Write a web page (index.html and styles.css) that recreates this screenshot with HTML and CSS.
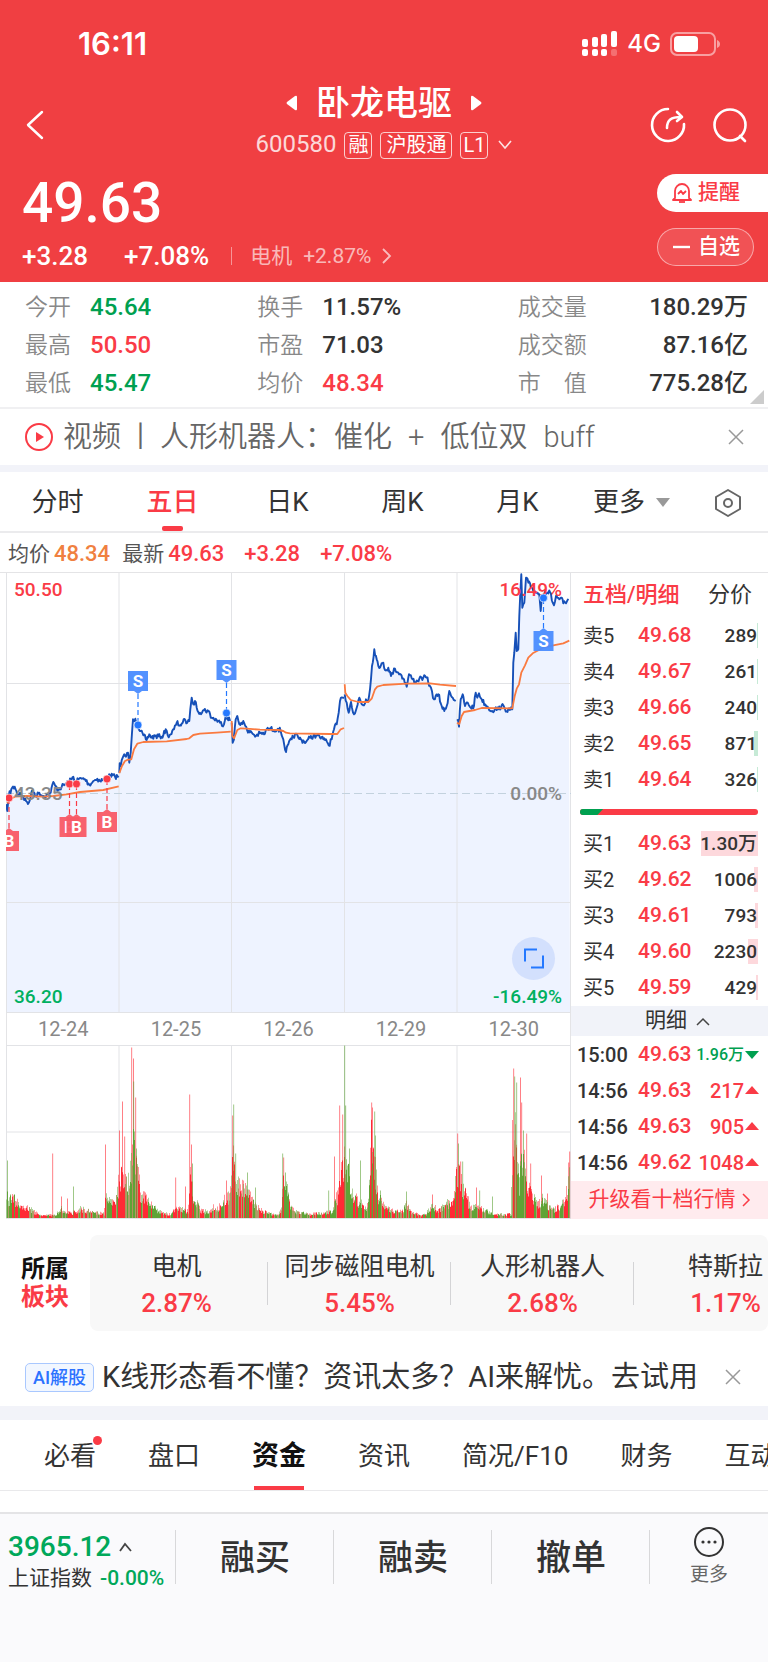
FILE: index.html
```
<!DOCTYPE html>
<html lang="zh-CN">
<head>
<meta charset="utf-8">
<meta name="viewport" content="width=device-width, initial-scale=1">
<title>卧龙电驱 600580</title>
<link rel="stylesheet" href="styles.css">
</head>
<body>
<header class="hero">
  <div class="status">
    <span class="clock">16:11</span>
    <div class="status-right">
      <svg class="signal" width="36" height="26" viewBox="0 0 36 26" fill="#fff" aria-hidden="true">
        <rect x="0" y="8" width="6" height="8" rx="2"/><rect x="10" y="6" width="6" height="10" rx="2"/><rect x="19" y="3" width="6" height="13" rx="2"/><rect x="29" y="0" width="6" height="16" rx="2"/>
        <rect x="0" y="18" width="6" height="7" rx="2"/><rect x="10" y="18" width="6" height="7" rx="2"/><rect x="19" y="18" width="6" height="7" rx="2"/><rect x="29" y="18" width="6" height="7" rx="2" opacity=".25"/>
      </svg>
      <span class="network">4G</span>
      <svg width="50" height="24" viewBox="0 0 50 24" aria-hidden="true">
        <rect x="1" y="1" width="44" height="22" rx="6" fill="none" stroke="#fff" stroke-opacity=".5" stroke-width="2"/>
        <rect x="4" y="4" width="24" height="16" rx="4" fill="#fff"/>
        <path d="M47 8c2 1 3 2 3 4s-1 3-3 4z" fill="#fff" opacity=".5"/>
      </svg>
    </div>
  </div>
  <nav class="nav">
    <button class="icon-btn back" aria-label="返回">
      <svg width="18" height="30" viewBox="0 0 18 30" fill="none" stroke="#fff" stroke-width="2.4" stroke-linecap="round" stroke-linejoin="round"><path d="M16 2 2 15l14 13"/></svg>
    </button>
    <div class="nav-center">
      <div class="title-row">
        <button aria-label="上一只"><svg width="12" height="16" viewBox="0 0 12 16" fill="#fff"><path d="M11 2v12q0 2-2 1L1 9Q0 8 1 7l8-6q2-1 2 1z"/></svg></button>
        <h1>卧龙电驱</h1>
        <button aria-label="下一只"><svg width="12" height="16" viewBox="0 0 12 16" fill="#fff"><path d="M1 2v12q0 2 2 1l8-6q1-1 0-2L3 1Q1 0 1 2z"/></svg></button>
      </div>
      <div class="code-row">
        <span class="code">600580</span>
        <span class="tag tag-narrow">融</span>
        <span class="tag">沪股通</span>
        <span class="tag tag-level">L1</span>
        <svg class="more-caret" width="14" height="10" viewBox="0 0 14 10" fill="none" stroke="#fff" stroke-opacity=".85" stroke-width="1.6"><path d="m1 1 6 7 6-7"/></svg>
      </div>
    </div>
    <div class="nav-actions">
      <button class="icon-btn" aria-label="分享">
        <svg width="36" height="36" viewBox="0 0 36 36" fill="none" stroke="#fff" stroke-width="2.6" stroke-linecap="round" stroke-linejoin="round"><path d="M18 2A16 16 0 1 0 34 17"/><path d="M17 21c0-8 4-11 14-11M27 5l5 5-5 4"/></svg>
      </button>
      <button class="icon-btn" aria-label="搜索">
        <svg width="36" height="36" viewBox="0 0 36 36" fill="none" stroke="#fff" stroke-width="2.6" stroke-linecap="round"><circle cx="18" cy="18" r="15.5"/><path d="m28 29 5 5"/></svg>
      </button>
    </div>
  </nav>
  <section class="quote">
    <div>
      <div class="price">49.63</div>
      <div class="change">
        <span>+3.28</span><span>+7.08%</span><i class="change-rule"></i>
        <a class="sector-link" href="#sectors">电机<span>+2.87%</span>
          <svg width="10" height="16" viewBox="0 0 10 16" fill="none" stroke="currentColor" stroke-width="1.8"><path d="m1 1 7 7-7 7"/></svg></a>
      </div>
    </div>
    <div class="pills">
      <button class="pill pill-alert">
        <svg width="20" height="22" viewBox="0 0 20 22" fill="none" stroke="currentColor" stroke-width="1.8" stroke-linejoin="round"><path d="M3 16V9a7 7 0 0 1 14 0v7l2 2H1z"/><path d="M7 20h6"/><path d="m6 12 3-3 2 3 3-3"/></svg>提醒</button>
      <button class="pill pill-watch"><svg width="17" height="4" viewBox="0 0 17 4"><path d="M0 2h17" stroke="#fff" stroke-width="2.4"/></svg>自选</button>
    </div>
  </section>
</header>

<main>
  <section class="stats">
    <dl><dt>今开</dt><dd class="down">45.64</dd></dl>
    <dl><dt>换手</dt><dd>11.57%</dd></dl>
    <dl class="wide"><dt>成交量</dt><dd>180.29万</dd></dl>
    <dl><dt>最高</dt><dd class="up">50.50</dd></dl>
    <dl><dt>市盈</dt><dd>71.03</dd></dl>
    <dl class="wide"><dt>成交额</dt><dd>87.16亿</dd></dl>
    <dl><dt>最低</dt><dd class="down">45.47</dd></dl>
    <dl><dt>均价</dt><dd class="up">48.34</dd></dl>
    <dl class="wide"><dt>市　值</dt><dd>775.28亿</dd></dl>
    <i class="corner"></i>
  </section>

  <section class="notice">
    <svg width="28" height="28" viewBox="0 0 28 28" fill="none" stroke="#fa3b46" stroke-width="2"><circle cx="14" cy="14" r="13"/><path d="M11 9v10l8-5z" fill="#fa3b46" stroke="none"/></svg>
    <p class="notice-text"><span>视频</span><span>丨</span><span>人形机器人：催化</span><span>+</span><span>低位双</span><span>buff</span></p>
    <button class="close" aria-label="关闭"><svg width="16" height="16" viewBox="0 0 16 16" stroke="#999" stroke-width="1.5"><path d="m1 1 14 14M15 1 1 15"/></svg></button>
  </section>

  <nav class="periods">
    <button>分时</button>
    <button class="active">五日</button>
    <button>日K</button>
    <button>周K</button>
    <button>月K</button>
    <button class="period-more">更多<i class="tri-down"></i></button>
    <button aria-label="图表设置"><svg width="28" height="28" viewBox="0 0 28 28" fill="none" stroke="#666" stroke-width="2" stroke-linejoin="round"><path d="M14 1 26 8v12l-12 7L2 20V8z"/><circle cx="14" cy="14" r="4"/></svg></button>
  </nav>

  <div class="legend">
    <span>均价<b class="avg">48.34</b></span>
    <span>最新<b class="up">49.63</b></span>
    <b class="up">+3.28</b>
    <b class="up">+7.08%</b>
  </div>

  <section class="board">
    <div class="charts">
      <svg id="price-chart" class="chart" viewBox="0 0 565 440" role="img" aria-label="五日分时走势"></svg>
      <div class="dates"><span>12-24</span><span>12-25</span><span>12-26</span><span>12-29</span><span>12-30</span></div>
      <svg id="volume-chart" class="chart" viewBox="0 0 565 174" role="img" aria-label="成交量"></svg>
    </div>

    <aside class="book">
      <div class="book-tabs"><button class="active">五档/明细</button><button>分价</button></div>
      <table class="levels sell">
        <tr><th>卖5</th><td>49.68</td><td><i style="width:1px"></i><span>289</span></td></tr>
        <tr><th>卖4</th><td>49.67</td><td><i style="width:1px"></i><span>261</span></td></tr>
        <tr><th>卖3</th><td>49.66</td><td><i style="width:1px"></i><span>240</span></td></tr>
        <tr><th>卖2</th><td>49.65</td><td><i style="width:4px"></i><span>871</span></td></tr>
        <tr><th>卖1</th><td>49.64</td><td><i style="width:1px"></i><span>326</span></td></tr>
      </table>
      <div class="ratio"><i style="width:13%"></i></div>
      <table class="levels buy">
        <tr><th>买1</th><td>49.63</td><td><i style="width:57px"></i><span>1.30万</span></td></tr>
        <tr><th>买2</th><td>49.62</td><td><i style="width:4px"></i><span>1006</span></td></tr>
        <tr><th>买3</th><td>49.61</td><td><i style="width:3px"></i><span>793</span></td></tr>
        <tr><th>买4</th><td>49.60</td><td><i style="width:10px"></i><span>2230</span></td></tr>
        <tr><th>买5</th><td>49.59</td><td><i style="width:2px"></i><span>429</span></td></tr>
      </table>
      <button class="detail-toggle">明细<svg width="14" height="9" viewBox="0 0 14 9" fill="none" stroke="#444" stroke-width="1.5"><path d="m1 8 6-6 6 6"/></svg></button>
      <table class="ticks">
        <tr><td>15:00</td><td>49.63</td><td class="small">1.96万<i class="arrow-down"></i></td></tr>
        <tr><td>14:56</td><td>49.63</td><td>217<i class="arrow-up"></i></td></tr>
        <tr><td>14:56</td><td>49.63</td><td>905<i class="arrow-up"></i></td></tr>
        <tr><td>14:56</td><td>49.62</td><td>1048<i class="arrow-up"></i></td></tr>
      </table>
      <a class="upgrade" href="#upgrade">升级看十档行情<svg width="9" height="14" viewBox="0 0 9 14" fill="none" stroke="currentColor" stroke-width="1.5"><path d="m1 1 6 6-6 6"/></svg></a>
    </aside>
  </section>

  <section class="sectors" id="sectors">
    <h2>所属<em>板块</em></h2>
    <ul>
      <li>电机<b>2.87%</b></li>
      <li>同步磁阻电机<b>5.45%</b></li>
      <li>人形机器人<b>2.68%</b></li>
      <li>特斯拉<b>1.17%</b></li>
    </ul>
  </section>

  <section class="ai">
    <span class="ai-badge">AI解股</span>
    <a class="ai-text" href="#ai">K线形态看不懂？资讯太多？AI来解忧。去试用</a>
    <button class="close" aria-label="关闭"><svg width="16" height="16" viewBox="0 0 16 16" stroke="#999" stroke-width="1.5"><path d="m1 1 14 14M15 1 1 15"/></svg></button>
  </section>

  <nav class="sections">
    <a href="#a">必看<i class="dot"></i></a>
    <a href="#b">盘口</a>
    <a href="#c" class="active">资金</a>
    <a href="#d">资讯</a>
    <a href="#e">简况/F10</a>
    <a href="#f">财务</a>
    <a href="#g">互动</a>
  </nav>
</main>

<footer class="dock">
  <button class="index">
    <span class="index-value">3965.12<svg width="13" height="10" viewBox="0 0 13 10" fill="none" stroke="#444" stroke-width="1.8"><path d="m1 9 5-7 6 7"/></svg></span>
    <span class="index-name">上证指数<b>-0.00%</b></span>
  </button>
  <button class="trade">融买</button>
  <button class="trade">融卖</button>
  <button class="trade">撤单</button>
  <button class="dock-more">
    <svg width="30" height="30" viewBox="0 0 30 30" fill="#333"><circle cx="15" cy="15" r="14" fill="none" stroke="#333" stroke-width="2"/><circle cx="9" cy="15" r="1.6"/><circle cx="15" cy="15" r="1.6"/><circle cx="21" cy="15" r="1.6"/></svg>
    更多
  </button>
</footer>
<script src="chart.js"></script>
</body>
</html>
```
FILE: styles.css
```
* { box-sizing: border-box; }
body {
  margin: 0;
  min-height: 100vh;
  display: flex;
  flex-direction: column;
  background: #fff;
  color: #333;
  font-family: Roboto, "Noto Sans CJK SC", sans-serif;
  font-size: 21px;
  line-height: 1.3;
  overflow-x: hidden;
}
button {
  margin: 0;
  padding: 0;
  border: 0;
  background: none;
  color: inherit;
  font: inherit;
}
a { color: inherit; text-decoration: none; }
svg { display: block; flex: none; }
p, h1, h2, ul, dl, dd { margin: 0; padding: 0; }
b { font-weight: 500; }
.up { color: #fa3b46; }
.down { color: #00a050; }

/* Header */
.hero { background: #f03f42; color: #fff; }
.status {
  height: 80px;
  padding: 8px 48px 0 78px;
  display: flex;
  align-items: center;
  justify-content: space-between;
  font-family: Inter, sans-serif;
}
.clock { font-size: 31px; font-weight: 600; }
.status-right { display: flex; align-items: center; gap: 9px; }
.network { font-size: 24px; font-weight: 500; }
.nav {
  display: grid;
  grid-template-columns: 1fr auto 1fr;
  height: 84px;
  padding: 0 20px;
}
.icon-btn { padding-top: 6px; display: flex; align-items: center; }
.back { padding-left: 6px; }
.title-row { display: flex; align-items: center; justify-content: center; gap: 18px; height: 46px; }
h1 { font-size: 34px; font-weight: 500; line-height: 46px; }
.code-row { display: flex; align-items: center; justify-content: center; gap: 8px; height: 38px; }
.code { font-size: 24px; opacity: .8; }
.tag {
  height: 27px;
  padding: 0 5px;
  border: 1px solid rgba(255, 255, 255, .75);
  border-radius: 4px;
  font-size: 20px;
  line-height: 25px;
}
.tag-narrow { padding: 0 3px; }
.tag-level { padding: 0 2px; }
.more-caret { margin-left: 2px; }
.nav-actions { display: flex; justify-content: flex-end; gap: 26px; }
.quote { display: flex; justify-content: space-between; height: 118px; }
.quote > div:first-child { padding-left: 22px; }
.price { font-size: 55px; font-weight: 500; line-height: 78px; }
.change { display: flex; align-items: center; font-size: 26px; font-weight: 500; line-height: 28px; gap: 36px; }
.change-rule { width: 1px; height: 18px; margin: 0 -18px 0 -14px; background: rgba(255, 255, 255, .45); }
.sector-link { display: flex; align-items: center; font-size: 21px; font-weight: 400; gap: 11px; color: rgba(255, 255, 255, .65); }
.pills { display: flex; flex-direction: column; align-items: stretch; width: 111px; padding-top: 10px; gap: 16px; }
.pill { display: flex; align-items: center; gap: 6px; height: 38px; padding-left: 15px; font-size: 21px; font-weight: 500; }
.pill-alert { border-radius: 19px 0 0 19px; background: #fff; color: #fa3b46; }
.pill-watch { margin-right: 14px; gap: 8px; border: 1px solid rgba(255, 255, 255, .5); border-radius: 19px; background: rgba(255, 255, 255, .1); }

/* Key figures */
.stats {
  position: relative;
  display: grid;
  grid-template-columns: 232fr 260fr 230fr;
  padding: 7px 20px 4px 25px;
  border-bottom: 2px solid #f0f0f2;
}
.stats dl { display: flex; align-items: center; gap: 19px; height: 38px; }
.stats .wide { justify-content: space-between; }
.stats dt { font-size: 23px; font-weight: 350; color: #888; white-space: nowrap; }
.stats dd { font-size: 24px; font-weight: 500; white-space: nowrap; }
.corner { position: absolute; right: 4px; bottom: 3px; border-left: 14px solid transparent; border-bottom: 14px solid #ccc; }

/* Promo rows */
.notice, .ai { display: flex; align-items: center; padding: 0 24px 0 25px; }
.notice { height: 56px; color: #666; }
.notice-text { display: flex; flex: 1; gap: 16px; padding: 2px 0 0 10px; font-size: 29px; font-weight: 350; white-space: nowrap; }
.notice-text span:nth-child(2) { margin: 0 -11px; }
.close { display: flex; }

/* Period tabs */
.periods {
  display: grid;
  grid-template-columns: 115fr 115fr 115fr 115fr 115fr 113fr 80fr;
  height: 68px;
  border-top: 7px solid #f2f3f9;
  border-bottom: 2px solid #ebebed;
  font-size: 26px;
}
.periods button { position: relative; display: flex; align-items: center; justify-content: center; padding-top: 2px; }
.periods .active { color: #fa3b46; font-weight: 500; }
.periods .active::after { content: ""; position: absolute; bottom: 0; width: 21px; height: 5px; border-radius: 2px; background: #fa3b46; }
.period-more { gap: 11px; }
.tri-down { border: solid transparent; border-width: 9px 7px 0; border-top-color: #999; }

.legend { display: flex; align-items: center; gap: 20px; height: 39px; padding: 3px 0 0 8px; color: #555; font-size: 21px; }
.legend span:first-child { margin-right: -8px; }
.legend b { font-size: 22px; }
.legend span b { padding-left: 4px; }
.avg { color: #f08040; }

/* Charts and order book */
.board { display: grid; grid-template-columns: minmax(0, 571fr) minmax(0, 197fr); border-top: 1px solid #e4e4e6; }
.charts { padding-left: 6px; }
.chart { display: block; width: 100%; height: auto; }
.chart text { font: 500 19px Roboto, sans-serif; }
.dates {
  display: grid;
  grid-template-columns: repeat(5, 1fr);
  height: 32px;
  border-left: 1px solid #e4e4e6;
  border-right: 1px solid #e4e4e6;
  text-align: center;
  font-size: 20px;
  line-height: 32px;
  color: #888;
}
.book { display: flex; flex-direction: column; }
.book-tabs { display: flex; justify-content: space-between; align-items: center; height: 45px; padding: 0 16px 0 12px; font-size: 22px; }
.book-tabs .active { color: #fa3b46; font-weight: 500; }
.book table { width: 100%; border-collapse: collapse; table-layout: fixed; }
.book td, .book th { height: 36px; padding: 0; white-space: nowrap; }
.levels th { width: 34%; padding-left: 12px; text-align: left; font-size: 20px; font-weight: 400; }
.levels td:nth-child(2), .ticks td:nth-child(2) { width: 28%; color: #fa3b46; font-size: 21px; font-weight: 500; }
.levels td:nth-child(3) { position: relative; padding-right: 11px; text-align: right; font-size: 19px; font-weight: 500; }
.levels td span { position: relative; }
.levels td i { position: absolute; right: 10px; top: 5px; height: 25px; background: #fdd8dc; }
.sell td i { background: #c6ead6; }
.ratio { height: 6px; margin: 11px 10px 11px 9px; border-radius: 3px; background: #fa3b46; overflow: hidden; }
.ratio i { display: block; height: 6px; background: #00a050; clip-path: polygon(0 0, 100% 0, 75% 100%, 0 100%); }
.detail-toggle { display: flex; align-items: center; justify-content: center; gap: 9px; width: 100%; height: 30px; padding-left: 16px; background: #f1f3f9; font-size: 21px; }
.ticks { margin-top: 1px; }
.ticks td { font-size: 20px; font-weight: 500; }
.ticks td:first-child { width: 34%; padding-left: 6px; }
.ticks td:last-child { padding-right: 9px; text-align: right; color: #fa3b46; }
.ticks td.small:last-child { color: #00a050; font-size: 16px; }
.arrow-up, .arrow-down { display: inline-block; margin-left: 1px; border: solid transparent; vertical-align: middle; }
.arrow-up { margin-bottom: 6px; border-width: 0 7px 8px; border-bottom-color: #fa3b46; }
.arrow-down { border-width: 8px 7px 0; border-top-color: #00a050; }
.upgrade { display: flex; flex: 1; align-items: center; justify-content: center; gap: 6px; min-height: 36px; background: #ffebee; color: #fa3b46; font-size: 21px; }

/* Sectors */
.sectors { display: flex; align-items: center; padding-top: 16px; }
.sectors h2 { width: 90px; padding-left: 21px; flex: none; font-size: 24px; line-height: 28px; color: #111; }
.sectors em { display: block; color: #fa3b46; font-style: normal; }
.sectors ul { display: flex; flex: 1; min-width: 0; height: 96px; overflow: hidden; border-radius: 8px; background: #f8f8f8; list-style: none; }
.sectors li { position: relative; flex: none; width: 183px; padding-top: 14px; text-align: center; font-size: 25px; line-height: 36px; }
.sectors li:first-child { width: 178px; padding-right: 5px; }
.sectors li:not(:last-child)::after { content: ""; position: absolute; right: 0; top: 27px; width: 1px; height: 43px; background: #d4d4d6; }
.sectors b { display: block; color: #fa3b46; font-size: 26px; }

.ai { height: 89px; padding: 17px 27px 0 25px; border-bottom: 14px solid #f2f3f9; }
.ai-badge { flex: none; padding: 0 7px; border: 1px solid #a9c8ff; border-radius: 5px; background: #f2f7ff; color: #2c72ff; font-size: 18px; line-height: 27px; font-weight: 500; }
.ai-text { flex: 1; padding: 2px 0 0 8px; font-size: 29px; white-space: nowrap; }

/* Section tabs */
.sections { display: flex; gap: 52px; height: 71px; padding-left: 44px; border-bottom: 1px solid #e9e9eb; font-size: 26px; line-height: 72px; white-space: nowrap; overflow: hidden; }
.sections a { position: relative; flex: none; height: 70px; }
.sections .active { color: #111; font-size: 27px; font-weight: 700; }
.sections .active::after { content: ""; position: absolute; left: 2px; right: 2px; bottom: 0; height: 4px; background: #fa3b46; }
.dot { position: absolute; right: -6px; top: 16px; width: 9px; height: 9px; border-radius: 50%; background: #fa3b46; }

/* Bottom dock */
.dock { display: grid; grid-template-columns: 176fr 158fr 158fr 158fr 118fr; align-items: start; flex: 1; margin-top: 21px; padding-top: 16px; border-top: 2px solid #e4e4e6; background: #fafafc; }
.dock > button { position: relative; height: 54px; }
.dock > button:not(:last-child)::after { content: ""; position: absolute; right: 0; top: 0; width: 1px; height: 54px; background: #d8d8da; }
.index { display: flex; flex-direction: column; padding: 1px 0 0 8px; white-space: nowrap; }
.index span { display: flex; flex: none; align-items: center; gap: 8px; height: 32px; }
.index-value { color: #00a85a; font-size: 28px; font-weight: 500; }
.index-name { font-size: 21px; }
.index b { color: #00a85a; }
.trade { padding-top: 3px; font-size: 35px; font-weight: 500; }
.dock-more { display: flex; flex-direction: column; align-items: center; justify-content: center; gap: 6px; color: #666; font-size: 19px; }
```
FILE: chart.js
```
const NS = "http://www.w3.org/2000/svg";
const GRID = "#e2e3e6";

function add(parent, tag, attrs, text) {
  const node = document.createElementNS(NS, tag);
  for (const key in attrs) node.setAttribute(key, attrs[key]);
  if (text) node.textContent = text;
  parent.appendChild(node);
  return node;
}

let seed = 7;
function random() {
  seed = (seed * 16807) % 2147483647;
  return seed / 2147483647;
}

// Points are flat x, y lists in thirds of a chart unit.
function pairs(list, dx) {
  const out = [];
  for (let i = 0; i < list.length; i += 2) out.push([list[i] / 3 + dx, list[i + 1] / 3 - 7]);
  return out;
}
const L = -6, R = 274;

const price = [
  pairs([18,715,22,735,26,690,34,670,44,662,52,685,60,680,68,690,78,705,84,714,92,692,98,672,108,690,118,680,130,690,145,685,152,680,160,648,166,660,175,672,185,662,195,655,205,648,215,640,220,632,225,648,235,640,245,638,255,640,268,656,280,645,292,638,300,645,310,640,320,638,330,628,345,632,356,630], L),
  pairs([358,620,359,592,362,600,368,575,373,565,378,572,384,560,388,590,392,560,396,500,399,460,406,458,413,475,420,495,430,508,440,522,448,505,455,515,465,510,480,512,490,508,497,490,503,508,512,505,522,490,530,470,540,478,548,470,556,462,562,470,568,465,571,430,575,395,580,415,585,405,590,425,600,440,612,432,625,435,635,455,650,462,660,470,672,475,677,450,682,455,692,462], L),
  pairs([695,470,698,530,702,520,707,460,712,450,718,475,724,470,730,465,736,480,744,500,752,495,760,505,768,510,780,502,792,505,800,490,812,488,822,492,834,488,842,495,850,520,858,558,865,535,875,520,885,505,895,515,905,522,918,528,930,515,940,510,952,508,960,515,970,520,978,520,986,538,995,520,1002,490,1010,475,1016,440,1020,405,1028,395,1032,395], L),
  pairs([194,385,200,410,206,440,213,408,222,445,230,425,238,395,245,415,252,418,258,400,264,408,270,370,276,300,283,250,290,280,300,305,310,290,315,312,325,305,333,330,345,308,355,320,362,325,372,340,380,362,387,325,398,340,408,348,418,338,430,335,440,335,450,360,462,400,475,385,485,420,493,435,500,420,508,375,518,395,527,405], R),
  pairs([532,460,537,482,542,400,548,385,555,420,563,410,572,425,582,420,587,380,592,395,597,382,605,400,615,415,625,425,637,435,645,428,655,430,665,418,675,430,690,432,697,430,700,290,703,260,707,200,710,255,715,250,718,150,724,25,727,125,733,110,738,35,745,50,755,65,770,80,778,85,782,135,786,90,795,78,810,78,818,110,822,118,828,90,838,100,843,95,850,112,858,112,866,102], R)
];
const average = [
  pairs([22,712,30,700,45,692,80,690,130,692,160,690,200,685,240,678,310,672,356,661], L),
  pairs([358,622,366,600,375,585,384,581,394,580,402,550,412,533,430,528,500,526,560,519,568,517,580,507,600,503,650,500,692,497], L),
  pairs([695,465,697,510,702,517,712,492,722,487,740,488,780,491,835,492,850,495,858,500,870,502,990,504,1012,504,1022,490,1032,486], L),
  pairs([194,355,196,380,202,390,212,402,235,408,265,408,275,398,285,370,292,362,310,357,380,353,450,352,480,356,528,360], R),
  pairs([531,470,538,474,545,450,552,438,585,432,605,426,697,427,704,390,710,368,717,355,724,320,735,298,745,275,758,262,790,245,820,238,850,232,868,224], R)
];

// Adds the minute-to-minute jitter between the main turning points.
function jitter(points) {
  const out = [points[0]];
  for (let i = 1; i < points.length; i++) {
    const [x0, y0] = points[i - 1], [x1, y1] = points[i];
    const steps = Math.max(1, Math.round((x1 - x0) / 0.9));
    for (let s = 1; s <= steps; s++) {
      const t = s / steps;
      const wobble = s === steps ? 0 : (random() - 0.5) * 5;
      out.push([x0 + (x1 - x0) * t, Math.max(1, y0 + (y1 - y0) * t + wobble)]);
    }
  }
  return out;
}
const toPath = pts => "M" + pts.map(p => p[0].toFixed(1) + " " + p[1].toFixed(1)).join("L");

const dayLines = [113, 225.5, 338.5, 451];
const chart = document.getElementById("price-chart");
const detailed = price.map(jitter);
const all = detailed.flat();
add(chart, "path", { d: toPath(all) + "L564 440L0 440Z", fill: "#eef3ff" });
add(chart, "path", { d: "M.5 0V440M564.5 0V440M0 110.5H565M0 329.5H565M0 439.5H565" + dayLines.map(x => "M" + x + " 0V440").join(""), stroke: GRID, fill: "none" });
add(chart, "path", { d: "M0 220.5H565", stroke: "#c3d2de", "stroke-dasharray": "8 4" });
detailed.forEach(p => add(chart, "path", { d: toPath(p), fill: "none", stroke: "#1650b8", "stroke-width": 1.9, "stroke-linejoin": "round" }));
average.forEach(p => add(chart, "path", { d: toPath(p), fill: "none", stroke: "#fa7a40", "stroke-width": 1.8, "stroke-linejoin": "round" }));

add(chart, "text", { x: 8, y: 23, fill: "#fa3b46" }, "50.50");
add(chart, "text", { x: 8, y: 227, fill: "#888" }, "43.35");
add(chart, "text", { x: 8, y: 430, fill: "#00b060" }, "36.20");
add(chart, "text", { x: 556, y: 23, fill: "#fa3b46", "text-anchor": "end" }, "16.49%");
add(chart, "text", { x: 556, y: 227, fill: "#888", "text-anchor": "end" }, "0.00%");
add(chart, "text", { x: 556, y: 430, fill: "#00b060", "text-anchor": "end" }, "-16.49%");

function marker(label, x, dotY, boxY) {
  const buy = label === "B";
  const above = boxY < dotY;
  const line = buy ? "#fa3b46" : "#2478ff";
  const fill = buy ? "#f85a66" : "#4a8cff";
  const edge = above ? boxY + 20 : boxY;
  const tip = above ? edge + 3 : edge - 3;
  add(chart, "path", { d: `M${x} ${tip}V${dotY}`, stroke: line, "stroke-width": 1.2, "stroke-dasharray": "5 3" });
  add(chart, "path", { d: `M${x - 10} ${boxY}h20v20h-20zM${x - 4} ${edge}L${x} ${tip}L${x + 4} ${edge}z`, fill, "fill-opacity": 0.95 });
  add(chart, "circle", { cx: x, cy: dotY, r: 4, fill: line, stroke: "#fff", "stroke-width": 0.6 });
  const text = add(chart, "text", { x, y: boxY + 16, fill: "#fff", "text-anchor": "middle" }, label);
  text.style.fontSize = "17px";
  text.style.fontWeight = "700";
}
marker("B", 3, 225, 258);
marker("B", 63.5, 211, 244);
marker("B", 70.5, 211, 244);
marker("B", 101, 206, 239);
marker("S", 132, 152, 98);
marker("S", 220.5, 140, 87);
marker("S", 537.5, 25, 58);

add(chart, "circle", { cx: 527.5, cy: 385.5, r: 21.5, fill: "#d3e0fd" });
add(chart, "path", { d: "M519 388.5V376.5H531M525 394.5H537V382.5", fill: "none", stroke: "#2478ff", "stroke-width": 2 });

// Volume: the general level, then single tall minutes (x, height, r|g).
const level = [0,40,2,24,8,24,14,15,20,14,28,8,35,4,50,4,55,12,60,7,66,7,75,12,85,8,98,6,99,28,105,17,111,28,113,48,118,50,122,42,125,60,128,100,131,60,134,32,140,22,148,13,155,7,165,5,170,12,178,11,182,8,184,50,187,28,195,9,203,8,208,14,212,12,222,27,225,52,227,70,232,42,236,36,242,32,248,17,255,10,262,6,273,4,275,16,277,40,280,42,284,16,288,8,295,7,305,5,315,7,326,8,331,26,334,54,337,60,339,75,342,52,348,28,355,18,361,13,363,36,365,90,367,85,370,50,373,24,380,12,390,8,397,9,400,18,404,9,415,4,420,6,426,16,432,10,440,18,448,20,451,60,455,45,460,26,465,13,472,14,485,6,492,5,505,5,507,120,511,90,513,40,516,85,520,50,526,28,532,16,536,24,540,18,546,10,553,14,559,20,562,42,564,60];
const spikes = [1,58,"g",46.5,65,"r",55,22,"r",61,20,"r",67,32,"g",99,74,"r",113,88,"r",116,117,"r",118.5,82,"r",125.5,171,"r",127,160,"r",127.5,137,"g",129.5,121,"r",130,70,"g",169.5,41,"r",179,32,"r",183.5,124,"r",185,74,"r",186,55,"g",220,38,"r",226.5,103,"r",227.5,114,"g",229.5,65,"g",241,46,"g",249,31,"g",276.5,65,"g",277.5,61,"r",279,46,"g",322.5,28,"g",328,62,"r",333.5,113,"r",336.5,104,"r",338.5,173,"g",339.5,113,"g",343,70,"g",354,58,"g",365.5,116,"r",366,111,"r",368.5,107,"g",369,83,"g",374,28,"g",400,27,"g",426,24,"r",451.5,85,"r",452,75,"g",454.5,57,"r",456.5,57,"g",470,31,"r",473.5,28,"g",486,22,"g",507.5,150,"r",508.5,142,"g",510.5,136,"g",514,141,"r",515.5,116,"r",517,88,"g",520.5,85,"r",524.5,55,"r",535,43,"r",541,25,"r",562.5,56,"r",563.5,67,"r"];

const volume = document.getElementById("volume-chart");
add(volume, "path", { d: "M.5 0V174M564.5 0V174M0 .5H565M0 87H565" + dayLines.map(x => "M" + x + " 0V174").join(""), stroke: GRID, fill: "none" });
const colors = { r: "#ff2a35", g: "#5fa336" };
const paths = { r: "", g: "" };
function bar(x, height, color, width) {
  paths[color] += `M${x} 173.5v${-height.toFixed(1)}h${width}v${height.toFixed(1)}z`;
}
let segment = 0, color = "r";
for (let x = 0.5; x < 564; x += 0.5) {
  while (level[segment + 2] < x) segment += 2;
  const t = (x - level[segment]) / (level[segment + 2] - level[segment]);
  const base = level[segment + 1] + (level[segment + 3] - level[segment + 1]) * t;
  if (random() > 0.55) color = random() > 0.5 ? "r" : "g";
  bar(x, base * (0.5 + random() * 0.6), color, 0.5);
}
for (let i = 0; i < spikes.length; i += 3) bar(spikes[i], spikes[i + 1], spikes[i + 2], 0.6);
for (const key in paths) add(volume, "path", { d: paths[key], fill: colors[key] });
add(volume, "path", { d: "M0 173.5H565", stroke: GRID });
```
